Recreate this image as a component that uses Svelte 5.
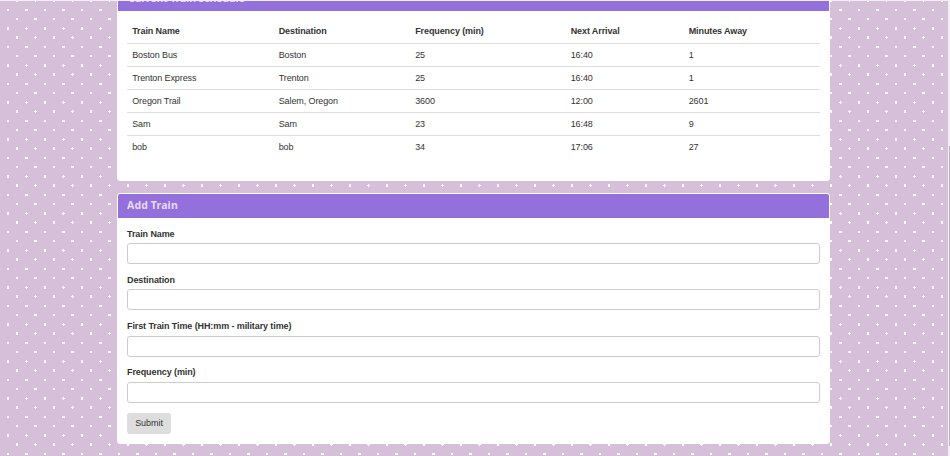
<script>
  const columns = ['Train Name', 'Destination', 'Frequency (min)', 'Next Arrival', 'Minutes Away'];
  const trains = [
    ['Boston Bus', 'Boston', '25', '16:40', '1'],
    ['Trenton Express', 'Trenton', '25', '16:40', '1'],
    ['Oregon Trail', 'Salem, Oregon', '3600', '12:00', '2601'],
    ['Sam', 'Sam', '23', '16:48', '9'],
    ['bob', 'bob', '34', '17:06', '27']
  ];
  const fields = ['Train Name', 'Destination', 'First Train Time (HH:mm - military time)', 'Frequency (min)'];
</script>

<div class="page">
  <svg class="dots" width="948" height="456" shape-rendering="crispEdges" aria-hidden="true">
    <defs>
      <pattern id="polka" width="37" height="37" patternUnits="userSpaceOnUse">
        <path fill="#fff" d="M7 9h2v2h-2zM25 9h3v2h-3zM16 18h2v2h-2zM34 18h3v2h-3zM7 27h2v3h-2zM26 27h1v3h-1zM25 28h3v1h-3zM16 36h2v1h-2zM16 0h2v2h-2zM35 36h1v1h-1zM34 0h3v1h-3zM35 1h1v1h-1z" />
      </pattern>
    </defs>
    <rect width="948" height="456" fill="url(#polka)" />
  </svg>

  <main>
    <section class="panel schedule">
      <h3>Current Train Schedule</h3>
      <table>
        <thead>
          <tr>{#each columns as column}<th>{column}</th>{/each}</tr>
        </thead>
        <tbody>
          {#each trains as train}
            <tr>{#each train as value}<td>{value}</td>{/each}</tr>
          {/each}
        </tbody>
      </table>
    </section>

    <section class="panel add">
      <h3>Add Train</h3>
      <form onsubmit={(e) => e.preventDefault()}>
        {#each fields as field, i}
          <div class="group">
            <label for="field-{i}">{field}</label>
            <input id="field-{i}" type="text" />
          </div>
        {/each}
        <button type="submit">Submit</button>
      </form>
    </section>
  </main>
  <div class="scrollbar"><div class="thumb"></div></div>
  <div class="edge"></div>
</div>

<style>
  :global(body) { margin: 0; overflow: hidden; }
  .page {
    position: relative;
    display: flex;
    justify-content: space-between;
    width: 950px;
    height: 456px;
    overflow: hidden;
    box-sizing: border-box;
    padding-left: 117px;
    background: #d6bfd8;
    color: #333;
    font: 9px/12px "Liberation Sans", Arial, sans-serif;
    letter-spacing: -0.1px;
  }
  .dots { position: absolute; left: 0; top: 0; }
  .edge { position: absolute; left: 0; top: 0; width: 100%; height: 1px; background: #f3eef5; }
  main { position: relative; width: 713px; }
  .panel {
    box-sizing: border-box;
    background: #fff;
    border: 1px solid #fff;
    border-radius: 3px;
    overflow: hidden;
  }
  .schedule { height: 195px; margin-top: -14px; }
  .add { height: 251px; margin-top: 12px; }
  h3 {
    box-sizing: border-box;
    height: 24px;
    margin: 0;
    padding-left: 9px;
    background: #9370db;
    color: #e9daf8;
    font: bold 10.5px/23px "Noto Sans", "Open Sans", sans-serif;
    letter-spacing: 0.15px;
  }
  .schedule h3 { padding-left: 10px; letter-spacing: -0.12px; }
  table {
    width: 693px;
    margin: 9px 0 0 9px;
    table-layout: fixed;
    border-collapse: separate;
    border-spacing: 0;
  }
  th, td { box-sizing: border-box; height: 23px; padding: 0 0 0 5.2px; text-align: left; }
  th { height: 24px; padding-bottom: 2px; border-bottom: 1px solid #ddd; }
  td { border-bottom: 1px solid #ddd; }
  tbody tr:last-child td { border-bottom-color: transparent; }
  th:nth-child(1) { width: 146.5px; }
  th:nth-child(2) { width: 136.5px; }
  th:nth-child(3) { width: 155.5px; }
  th:nth-child(4) { width: 118px; }
  form { padding: 9.8px 9px 0; }
  .group { height: 46.2px; }
  label { display: block; height: 15.4px; font-weight: bold; }
  input {
    display: block;
    box-sizing: border-box;
    width: 693px;
    height: 21px;
    border: 1px solid #ccc;
    border-radius: 3px;
    padding: 4px 8px;
    background: #fff;
    font: inherit;
    outline: none;
  }
  button {
    display: block;
    width: 44px;
    height: 21px;
    padding: 0;
    border: 0;
    border-radius: 3px;
    background: #ddd;
    color: #333;
    font: inherit;
    letter-spacing: -0.05px;
  }
  .scrollbar { box-sizing: border-box; width: 2px; padding: 146px 0 0 1px; background: #f1f1f1; }
  .thumb { height: 300px; background: #b5b5b5; }
</style>
